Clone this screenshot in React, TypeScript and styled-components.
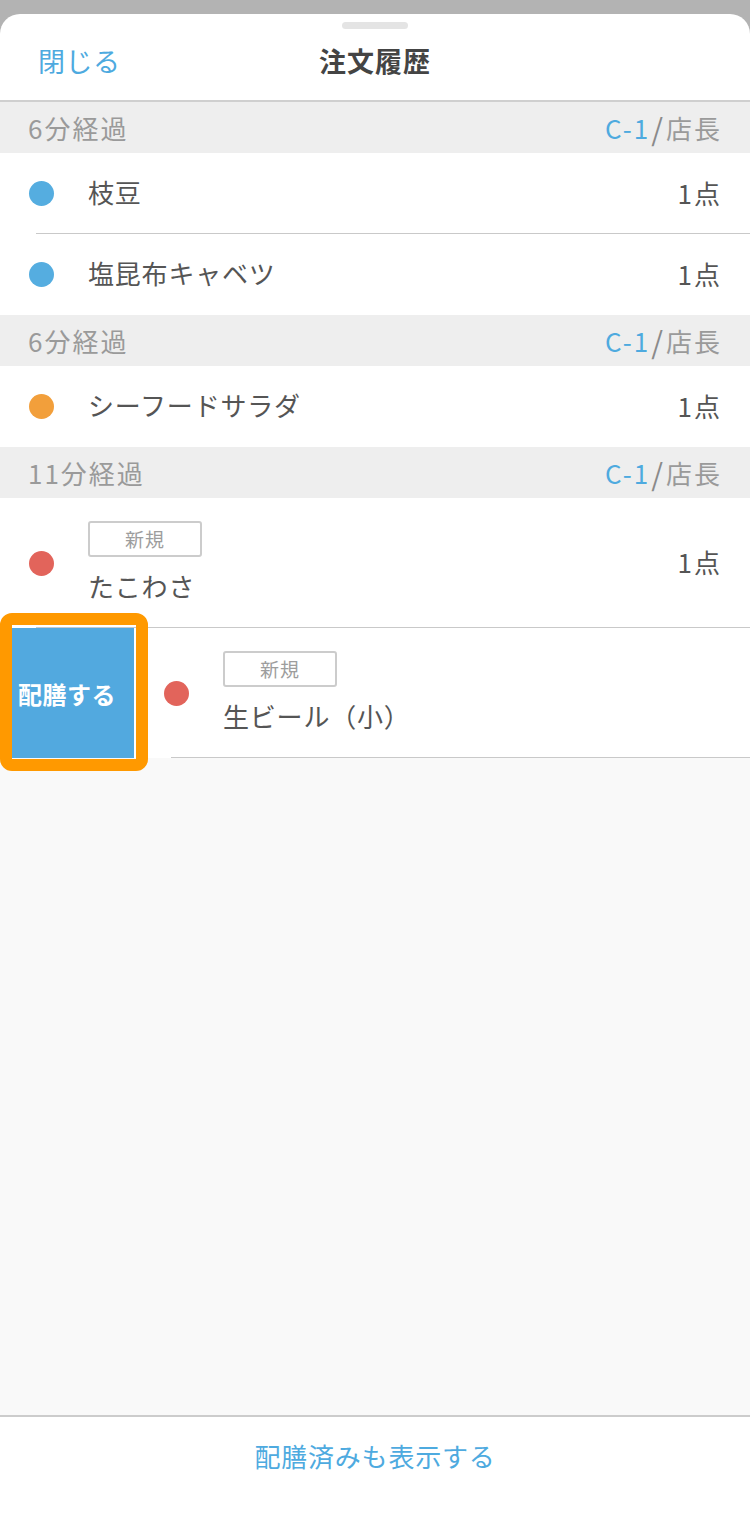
import React from "react";
import styled, { createGlobalStyle } from "styled-components";

const GlobalStyle = createGlobalStyle`
  html, body {
    margin: 0;
    padding: 0;
    background: #b3b3b3;
    overflow-x: hidden;
  }
  * {
    box-sizing: border-box;
  }
  body {
    font-family: "Noto Sans CJK JP", "Noto Sans", sans-serif;
  }
`;

type Tone = "blue" | "orange" | "red";

const dotColors: Record<Tone, string> = {
  blue: "#55ade0",
  orange: "#f29f3b",
  red: "#e2645b",
};

type Item = { name: string; tone: Tone; qty?: string; isNew?: boolean };
type Group = { elapsed: string; table: string; staff: string; items: Item[] };

const groups: Group[] = [
  {
    elapsed: "6分経過",
    table: "C-1",
    staff: "店長",
    items: [
      { name: "枝豆", tone: "blue", qty: "1点" },
      { name: "塩昆布キャベツ", tone: "blue", qty: "1点" },
    ],
  },
  {
    elapsed: "6分経過",
    table: "C-1",
    staff: "店長",
    items: [{ name: "シーフードサラダ", tone: "orange", qty: "1点" }],
  },
  {
    elapsed: "11分経過",
    table: "C-1",
    staff: "店長",
    items: [{ name: "たこわさ", tone: "red", qty: "1点", isNew: true }],
  },
];

const App = () => {
  return (
    <>
      <GlobalStyle />
      <Sheet>
        <Handle />
        <Header>
          <CloseButton>閉じる</CloseButton>
          <Title>注文履歴</Title>
        </Header>

        <List>
          {groups.map((group, gi) => (
            <React.Fragment key={gi}>
              <SectionHeader>
                <Elapsed>{group.elapsed}</Elapsed>
                <Assignee>
                  <TableNo>{group.table}</TableNo>
                  <Slash>/</Slash>
                  {group.staff}
                </Assignee>
              </SectionHeader>
              {group.items.map((item, ii) => {
                const isLastGroup = gi === groups.length - 1;
                const divider = ii < group.items.length - 1 || isLastGroup;
                return (
                  <Row key={ii} $tall={!!item.isNew} $divider={divider}>
                    <Dot $tone={item.tone} />
                    <ItemBody>
                      {item.isNew && <NewBadge>新規</NewBadge>}
                      <ItemName>{item.name}</ItemName>
                    </ItemBody>
                    {item.qty && <Qty>{item.qty}</Qty>}
                  </Row>
                );
              })}
            </React.Fragment>
          ))}

          {/* row swiped open to reveal its action */}
          <SwipeRow>
            <ServeAction>配膳する</ServeAction>
            <Row $tall $divider $shifted>
              <Dot $tone="red" />
              <ItemBody>
                <NewBadge>新規</NewBadge>
                <ItemName>生ビール（小）</ItemName>
              </ItemBody>
            </Row>
            <Highlight />
          </SwipeRow>
        </List>

        <EmptyArea />

        <Footer>
          <FooterLink>配膳済みも表示する</FooterLink>
        </Footer>
      </Sheet>
    </>
  );
};

export default App;

const Sheet = styled.div`
  margin-top: 14px;
  width: 750px;
  min-height: 1506px;
  background: #fff;
  border-radius: 20px 20px 0 0;
  overflow: hidden;
  display: flex;
  flex-direction: column;
  padding-top: 8px;
`;

const Handle = styled.div`
  width: 66px;
  height: 7px;
  border-radius: 4px;
  background: #e4e4e4;
  margin: 0 auto;
  flex-shrink: 0;
`;

const Header = styled.div`
  position: relative;
  height: 73px;
  display: flex;
  align-items: center;
  justify-content: center;
  padding-bottom: 9px;
  border-bottom: 2px solid #cfcfcf;
  flex-shrink: 0;
`;

const CloseButton = styled.span`
  position: absolute;
  left: 38px;
  top: 12px;
  font-size: 27px;
  color: #4eaadf;
  letter-spacing: 0.5px;
`;

const Title = styled.h1`
  margin: 0;
  font-size: 27px;
  font-weight: 700;
  color: #444;
  letter-spacing: 1px;
`;

const List = styled.div`
  background: #fff;
  flex-shrink: 0;
`;

const SectionHeader = styled.div`
  height: 51px;
  background: #eeeeee;
  display: flex;
  align-items: center;
  justify-content: space-between;
  padding: 0 28px 0 28px;
  font-size: 26px;
  color: #9a9a9a;
`;

const Elapsed = styled.span`
  letter-spacing: 2px;
`;

const Assignee = styled.span`
  display: flex;
  align-items: center;
  letter-spacing: 2px;
`;

const TableNo = styled.span`
  color: #4eaadf;
`;

const Slash = styled.span`
  font-size: 30px;
  margin: 0 1px;
  color: #8a8a8a;
`;

const Row = styled.div<{ $tall?: boolean; $divider?: boolean; $shifted?: boolean }>`
  position: relative;
  display: flex;
  align-items: center;
  height: ${(p) => (p.$tall ? "130px" : "81px")};
  padding: 0 28px 0 29px;
  background: #fff;
  ${(p) => (p.$shifted ? "width: 750px; flex-shrink: 0;" : "")}

  &::after {
    content: "";
    display: ${(p) => (p.$divider ? "block" : "none")};
    position: absolute;
    left: 36px;
    right: 0;
    bottom: 0;
    height: 1px;
    background: #c9c9c9;
  }
`;

const Dot = styled.span<{ $tone: Tone }>`
  width: 25px;
  height: 25px;
  border-radius: 50%;
  background: ${(p) => dotColors[p.$tone]};
  flex-shrink: 0;
`;

const ItemBody = styled.div`
  flex: 1;
  display: flex;
  flex-direction: column;
  align-items: flex-start;
  gap: 13px;
  margin-left: 34px;
  margin-bottom: 4px;
`;

const ItemName = styled.span`
  font-size: 26px;
  line-height: 32px;
  color: #555;
  letter-spacing: 0.8px;
`;

const NewBadge = styled.span`
  width: 114px;
  height: 36px;
  border: 2px solid #cccccc;
  border-radius: 3px;
  display: flex;
  align-items: center;
  justify-content: center;
  font-size: 19px;
  color: #9d9d9d;
  letter-spacing: 1px;
`;

const Qty = styled.span`
  font-size: 26px;
  color: #555;
  letter-spacing: 2px;
  padding-bottom: 3px;
`;

const SwipeRow = styled.div`
  position: relative;
  display: flex;
`;

const ServeAction = styled.button`
  width: 135px;
  flex-shrink: 0;
  border: none;
  border-right: 1px solid #fff;
  background: #52a9df;
  color: #fff;
  font-family: inherit;
  font-size: 24px;
  font-weight: 700;
  padding: 0;
  letter-spacing: 0.5px;
`;

const Highlight = styled.div`
  position: absolute;
  left: 0;
  top: -15px;
  width: 148px;
  height: 158px;
  border: 12px solid #ff9900;
  border-radius: 12px;
  pointer-events: none;
`;

const EmptyArea = styled.div`
  flex: 1;
  background: #f9f9f9;
`;

const Footer = styled.div`
  height: 105px;
  border-top: 2px solid #cccccc;
  display: flex;
  justify-content: center;
  padding-top: 22px;
  flex-shrink: 0;
`;

const FooterLink = styled.span`
  font-size: 26px;
  line-height: 34px;
  color: #4eaadf;
  letter-spacing: 0.8px;
`;
